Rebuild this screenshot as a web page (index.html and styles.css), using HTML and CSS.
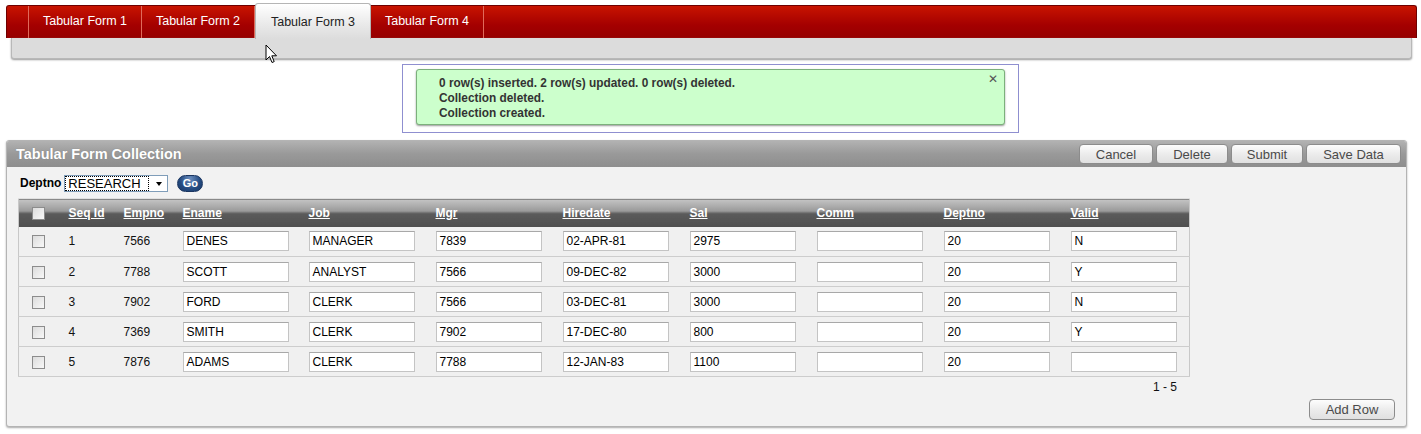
FILE: index.html
```html
<!DOCTYPE html>
<html>
<head>
<meta charset="utf-8">
<link rel="stylesheet" href="styles.css">
</head>
<body>
<div class="page">
  <div class="tabbar">
    <span class="tab stub"></span>
    <span class="tab">Tabular Form 1</span>
    <span class="tab">Tabular Form 2</span>
    <span class="tab active">Tabular Form 3</span>
    <span class="tab">Tabular Form 4</span>
  </div>
  <div class="subbar"></div>

  <div class="msgwrap">
    <div class="msg">
      <div>0 row(s) inserted. 2 row(s) updated. 0 row(s) deleted.</div>
      <div>Collection deleted.</div>
      <div>Collection created.</div>
      <span class="close">✕</span>
    </div>
  </div>

  <div class="region">
    <div class="rhead">
      <span class="rtitle">Tabular Form Collection</span>
      <div class="btns">
        <span class="btn w74">Cancel</span>
        <span class="btn w72">Delete</span>
        <span class="btn w72">Submit</span>
        <span class="btn w95">Save Data</span>
      </div>
    </div>
    <div class="rbody">
      <div class="filter">
        <span class="flabel">Deptno</span>
        <span class="select"><span class="selval">RESEARCH</span><span class="arrow"></span></span>
        <span class="go">Go</span>
      </div>
      <table class="grid">
        <colgroup>
          <col class="c0"><col class="c1"><col class="c2"><col class="c3">
          <col class="cw"><col class="cw"><col class="cw"><col class="cw"><col class="cw"><col class="cw"><col class="cl">
        </colgroup>
        <thead>
          <tr>
            <th class="chk"><span class="cb"></span></th>
            <th>Seq Id</th><th>Empno</th><th>Ename</th><th>Job</th><th>Mgr</th><th>Hiredate</th><th>Sal</th><th>Comm</th><th>Deptno</th><th>Valid</th>
          </tr>
        </thead>
        <tbody>
          <tr><td class="chk"><span class="cb"></span></td><td>1</td><td>7566</td><td><span class="in">DENES</span></td><td><span class="in">MANAGER</span></td><td><span class="in">7839</span></td><td><span class="in">02-APR-81</span></td><td><span class="in">2975</span></td><td><span class="in"></span></td><td><span class="in">20</span></td><td><span class="in">N</span></td></tr>
          <tr><td class="chk"><span class="cb"></span></td><td>2</td><td>7788</td><td><span class="in">SCOTT</span></td><td><span class="in">ANALYST</span></td><td><span class="in">7566</span></td><td><span class="in">09-DEC-82</span></td><td><span class="in">3000</span></td><td><span class="in"></span></td><td><span class="in">20</span></td><td><span class="in">Y</span></td></tr>
          <tr><td class="chk"><span class="cb"></span></td><td>3</td><td>7902</td><td><span class="in">FORD</span></td><td><span class="in">CLERK</span></td><td><span class="in">7566</span></td><td><span class="in">03-DEC-81</span></td><td><span class="in">3000</span></td><td><span class="in"></span></td><td><span class="in">20</span></td><td><span class="in">N</span></td></tr>
          <tr><td class="chk"><span class="cb"></span></td><td>4</td><td>7369</td><td><span class="in">SMITH</span></td><td><span class="in">CLERK</span></td><td><span class="in">7902</span></td><td><span class="in">17-DEC-80</span></td><td><span class="in">800</span></td><td><span class="in"></span></td><td><span class="in">20</span></td><td><span class="in">Y</span></td></tr>
          <tr><td class="chk"><span class="cb"></span></td><td>5</td><td>7876</td><td><span class="in">ADAMS</span></td><td><span class="in">CLERK</span></td><td><span class="in">7788</span></td><td><span class="in">12-JAN-83</span></td><td><span class="in">1100</span></td><td><span class="in"></span></td><td><span class="in">20</span></td><td><span class="in"></span></td></tr>
        </tbody>
      </table>
      <div class="pager">1 - 5</div>
      <div class="foot"><span class="btn w86">Add Row</span></div>
    </div>
  </div>

  <svg class="cursor" width="13" height="20" viewBox="0 0 13 20">
    <path d="M1 1 L1 16 L4.5 12.5 L7 18.5 L9.2 17.6 L6.8 11.8 L11.5 11.8 Z" fill="#fff" stroke="#000" stroke-width="1" stroke-linejoin="round"/>
  </svg>
</div>
</body>
</html>
```

FILE: styles.css
```css
* { box-sizing: border-box; }
html, body { margin: 0; padding: 0; background: #fff; }
body { font-family: "Liberation Sans", Arial, sans-serif; font-size: 12px; color: #000; }
.page { position: relative; width: 1421px; height: 434px; overflow: hidden; }

.tabbar {
  margin: 5px 4px 0 6px;
  height: 33px;
  display: flex;
  align-items: stretch;
  background: linear-gradient(#c81400, #a40000 60%, #960000);
  border: 1px solid #6e0000;
  border-bottom: none;
  border-radius: 3px 3px 0 0;
}
.tab {
  width: 113px;
  color: #fff;
  font-size: 12.5px;
  display: flex;
  align-items: center;
  justify-content: center;
  border-right: 1px solid #e06a5a;
  padding-bottom: 2px;
}
.tab.stub { width: 22px; }
.tab.active {
  width: 116px;
  margin-top: -3px;
  height: 36px;
  color: #222;
  background: linear-gradient(#ffffff, #e9e9e9 60%, #dcdcdc);
  border: 1px solid #b5b5b5;
  border-bottom: none;
  border-radius: 3px 3px 0 0;
  padding-top: 3px;
}
.subbar {
  margin: 0 9px 0 11px;
  height: 21px;
  background: #dcdcdc;
  border: 1px solid #b8b8b8;
  border-top: none;
  border-radius: 0 0 3px 3px;
  box-shadow: 0 1px 2px #999;
}

.msgwrap {
  width: 617px;
  margin: 5px auto 0;
  height: 69px;
  border: 1px solid #8f8fd0;
  padding: 4px 13px 0 13px;
}
.msg {
  position: relative;
  height: 56px;
  background: #ccffcc;
  border: 1px solid #7cb07c;
  border-radius: 3px;
  box-shadow: 0 1px 2px #999;
  padding: 6px 0 0 22px;
  font-size: 11.85px;
  font-weight: bold;
  color: #333;
  line-height: 14.8px;
}
.close {
  position: absolute;
  right: 6px;
  top: 2px;
  font-weight: normal;
  font-size: 12px;
  color: #555;
}

.region {
  margin: 7px 14px 0 6px;
  height: 287px;
  border: 1px solid #b4b4b4;
  border-radius: 3px;
  background: #f2f2f2;
  box-shadow: 0 1px 2px #aaa;
}
.rhead {
  height: 26px;
  background: linear-gradient(#b2b2b2, #999 50%, #8e8e8e);
  display: flex;
  align-items: center;
  justify-content: space-between;
  padding: 0 5px 0 9px;
  border-radius: 2px 2px 0 0;
}
.rtitle {
  color: #fff;
  font-weight: bold;
  font-size: 14.5px;
  text-shadow: 0 0 1px #777;
}
.btns { display: flex; gap: 3px; }
.btn {
  display: inline-flex;
  align-items: center;
  justify-content: center;
  height: 20px;
  border: 1px solid #8c8c8c;
  border-radius: 4px;
  background: linear-gradient(#fdfdfd, #ececec 50%, #e0e0e0);
  color: #4a4a4a;
  font-size: 13px;
}
.w74 { width: 74px; }
.w72 { width: 72px; }
.w95 { width: 95px; }
.w86 { width: 86px; }

.rbody { padding: 7px 11px 0 11px; }
.filter { display: flex; align-items: center; height: 18px; margin-bottom: 6px; }
.flabel { font-weight: bold; font-size: 12px; margin: 0 3px 0 2px; }
.select {
  position: relative;
  width: 104px;
  height: 17px;
  border: 1px solid #7f9db9;
  background: #fff;
  display: flex;
  align-items: center;
  padding: 1px;
}
.selval {
  width: 82px;
  height: 13px;
  outline: 1px dotted #000;
  font-size: 13px;
  line-height: 13px;
  padding-left: 2px;
}
.arrow {
  position: absolute;
  right: 5px;
  top: 6px;
  border-left: 3px solid transparent;
  border-right: 3px solid transparent;
  border-top: 4px solid #000;
}
.go {
  margin-left: 9px;
  width: 26px;
  height: 17px;
  border-radius: 9px;
  background: radial-gradient(ellipse at 50% 20%, #6c8fc0, #234a80 60%, #1b3b68);
  border: 1px solid #1a3560;
  color: #fff;
  font-weight: bold;
  font-size: 11px;
  display: flex;
  align-items: center;
  justify-content: center;
}

.grid {
  width: 1171px;
  table-layout: fixed;
  border-collapse: collapse;
  border: 1px solid #c8c8c8;
}
.c0 { width: 44px; }
.c1 { width: 55px; }
.c2 { width: 59px; }
.c3 { width: 126px; }
.cw { width: 127px; }
.cl { width: 125px; }
.grid th {
  height: 28px;
  background: linear-gradient(#c4c4c4, #999 42%, #5b5b5b 50%, #4e4e4e);
  color: #fff;
  font-weight: bold;
  text-decoration: underline;
  text-align: left;
  padding: 0 6px;
  font-size: 12px;
  border-top: 1px solid #e0e0e0;
}
.grid td {
  height: 30px;
  padding: 0 6px;
  border-bottom: 1px solid #cdcdcd;
  background: #f0f0f0;
  font-size: 12px;
  color: #111;
}
.grid .chk { padding-left: 13px; }
.cb {
  display: inline-block;
  width: 13px;
  height: 13px;
  border: 1px solid #8c8c8c;
  background: linear-gradient(135deg, #dcdcdc, #f8f8f8);
  vertical-align: middle;
}
.in {
  display: flex;
  align-items: center;
  width: 106px;
  height: 20px;
  background: #fff;
  border: 1px solid #c4c4c4;
  border-top-color: #a8a8a8;
  padding-left: 3px;
  font-size: 12px;
  color: #000;
}
.pager {
  width: 1171px;
  text-align: right;
  padding: 3px 12px 0 0;
  height: 22px;
  font-size: 12px;
  color: #111;
}
.foot { display: flex; justify-content: flex-end; padding-right: 0; }
.foot .btn { height: 21px; }

.cursor { position: absolute; left: 265px; top: 44px; }
```
